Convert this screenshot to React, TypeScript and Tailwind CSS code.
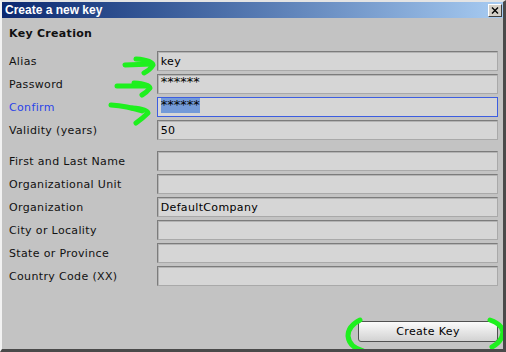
import React from "react";

const font = { fontFamily: '"DejaVu Sans", Verdana, sans-serif' };

type Row = { label: string; value?: string; kind?: "focus" | "plain" };

const keyRows: Row[] = [
  { label: "Alias", value: "key" },
  { label: "Password", value: "******" },
  { label: "Confirm", value: "******", kind: "focus" },
  { label: "Validity (years)", value: "50" },
];

const ownerRows: Row[] = [
  { label: "First and Last Name" },
  { label: "Organizational Unit" },
  { label: "Organization", value: "DefaultCompany" },
  { label: "City or Locality" },
  { label: "State or Province" },
  { label: "Country Code (XX)" },
];

function Field({ row }: { row: Row }) {
  const focused = row.kind === "focus";
  const stars = row.value?.startsWith("*");
  return (
    <div className="flex items-center h-[20px]">
      <div
        className={
          "w-[148px] text-[11px] leading-none tracking-[0.35px] " +
          (focused ? "text-[#2a44e8]" : "text-[#111111]")
        }
      >
        {row.label}
      </div>
      <div
        className={
          "w-[342px] h-[20px] bg-[#d6d6d6] flex items-center px-[3px] text-[11px] leading-none tracking-[0.35px] text-black " +
          (focused
            ? "border border-[#3d5ee0]"
            : "border border-t-[#7c7c7c] border-l-[#7c7c7c] border-r-[#a9a9a9] border-b-[#a9a9a9] shadow-[inset_1px_1px_0_#b4b4b4]")
        }
      >
        {focused ? (
          <span className="bg-[#739ad8] self-start text-[13px] tracking-normal leading-[12px] pt-[1px] pb-[2px]">
            {row.value}
          </span>
        ) : stars ? (
          <span className="self-start text-[13px] tracking-normal leading-[12px] pt-[1px]">{row.value}</span>
        ) : (
          <span>{row.value}</span>
        )}
      </div>
    </div>
  );
}

function Marks() {
  const s = {
    stroke: "#1ef01e",
    strokeWidth: 5,
    fill: "none",
    strokeLinecap: "round" as const,
    strokeLinejoin: "round" as const,
  };
  return (
    <svg className="absolute left-0 top-0 pointer-events-none" width="506" height="352">
      <path {...s} d="M123 63 L150 62" />
      <path {...s} d="M134 57 Q150 58 151 63 Q148 68 142 71" />
      <path {...s} d="M115 84 L146 84" />
      <path {...s} d="M132 81 Q147 82 148 86 Q145 90 140 93" />
      <path {...s} d="M109 103 Q125 104 140 109" />
      <path {...s} d="M130 106 Q145 107 146 111 Q141 116 134 121" />
      <path {...s} d="M358 318 Q346 324 346 334 Q347 345 361 349" />
      <path {...s} d="M488 318 Q500 322 501 330 Q500 340 490 345" />
    </svg>
  );
}

export default function App() {
  return (
    <div
      className="relative w-[506px] h-[352px] bg-[#c3c3c3] border-t-2 border-l-2 border-t-[#e4e4e4] border-l-[#f2f2f2] border-r-[3px] border-b-[3px] border-r-[#4a4a4a] border-b-[#4a4a4a] flex flex-col overflow-hidden"
      style={font}
    >
      <div className="h-[16px] bg-gradient-to-r from-[#0c2870] to-[#a8ccf2] flex items-center justify-between pl-[3px] pr-[1px]">
        <span
          className="text-white font-bold text-[12px] leading-none"
          style={{ fontFamily: '"Liberation Sans", Arial, sans-serif' }}
        >
          Create a new key
        </span>
        <div className="w-[14px] h-[13px] bg-[#d4d0c8] border border-t-white border-l-white border-r-[#404040] border-b-[#404040] flex items-center justify-center">
          <svg width="8" height="7" viewBox="0 0 8 7">
            <path d="M1 0.5 L7 6.5 M7 0.5 L1 6.5" stroke="#000" strokeWidth="1.4" />
          </svg>
        </div>
      </div>

      <div className="flex flex-col flex-1 pl-[7px] pt-[8px] pr-[5px] pb-[7px]">
        <div className="text-[11px] font-bold leading-none tracking-[0.3px] text-[#111111] h-[14px] flex items-center">
          Key Creation
        </div>
        <div className="flex flex-col gap-[3px] mt-[11px]">
          {keyRows.map((r) => (
            <Field key={r.label} row={r} />
          ))}
        </div>
        <div className="flex flex-col gap-[3px] mt-[11px]">
          {ownerRows.map((r) => (
            <Field key={r.label} row={r} />
          ))}
        </div>
        <div className="flex-1" />
        <div className="flex justify-end">
          <button className="w-[140px] h-[21px] rounded-[3px] border border-[#505050] bg-gradient-to-b from-[#fbfbfb] to-[#d2d2d2] text-[11px] leading-none tracking-[0.35px] text-black">
            Create Key
          </button>
        </div>
      </div>

      <Marks />
    </div>
  );
}
